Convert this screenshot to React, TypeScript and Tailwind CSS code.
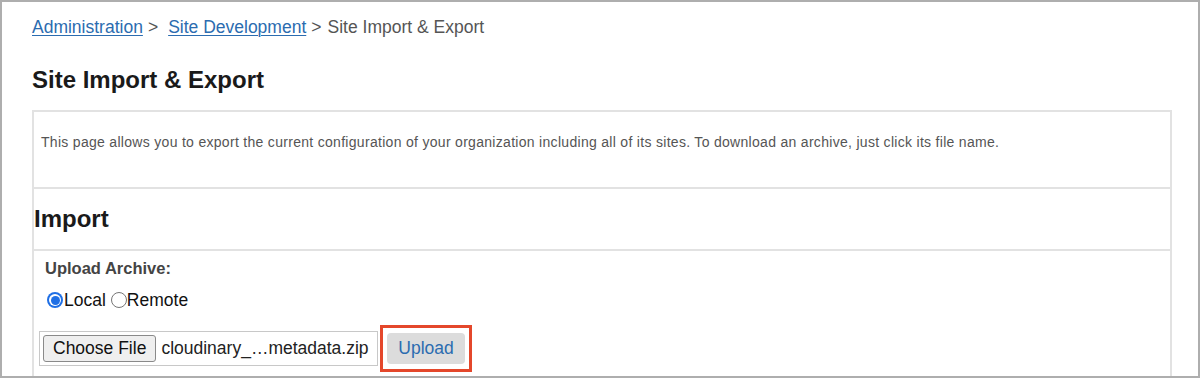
import React from "react";

function Radio({ checked }: { checked?: boolean }) {
  if (checked) {
    return (
      <span className="flex h-[16px] w-[16px] shrink-0 items-center justify-center rounded-full bg-[#1f6fe5]">
        <span className="flex h-[12px] w-[12px] items-center justify-center rounded-full bg-white">
          <span className="h-[9px] w-[9px] rounded-full bg-[#1f6fe5]" />
        </span>
      </span>
    );
  }
  return <span className="box-border block h-[16px] w-[16px] shrink-0 rounded-full border border-[#767676] bg-white" />;
}

export default function App() {
  return (
    <div className="box-border h-[378px] w-[1200px] overflow-hidden border-2 border-[#aeaeae] bg-white pl-[30px] pr-[26px] font-['Liberation_Sans',Arial,sans-serif]">
      {/* Breadcrumb */}
      <div className="mt-[15px] flex items-center text-[17.5px] leading-[20px] text-[#555]">
        <a href="#" className="text-[#2b6cb0] underline decoration-1 underline-offset-2">
          Administration
        </a>
        <span className="ml-[5px] mr-[10px]">&gt;</span>
        <a href="#" className="text-[#2b6cb0] underline decoration-1 underline-offset-2">
          Site Development
        </a>
        <span className="ml-[5px] mr-[6px]">&gt;</span>
        <span>Site Import &amp; Export</span>
      </div>

      <h1 className="mt-[29px] text-[24px] font-bold leading-[28px] text-[#1a1a1a]">
        Site Import &amp; Export
      </h1>

      {/* Content table */}
      <div className="mt-[16px] border-2 border-[#e2e2e2]">
        <div className="box-border h-[75px] px-[7px] pt-[22px] text-[14px] leading-[17px] tracking-[0.3px] text-[#555]">
          This page allows you to export the current configuration of your organization including all of its sites. To download an archive, just click its file name.
        </div>
        <div className="box-border flex h-[62px] items-center border-t-2 border-[#e2e2e2]">
          <h2 className="text-[24px] font-bold leading-[28px] text-[#1a1a1a]">Import</h2>
        </div>
        <div className="box-border h-[160px] border-t-2 border-[#e2e2e2] pt-[7px]">
          <div className="pl-[11px] text-[16.5px] font-bold leading-[20px] text-[#444]">Upload Archive:</div>
          <div className="mt-[12px] flex items-center pl-[13px] text-[17.5px] leading-[20px] text-[#111]">
            <Radio checked />
            <span className="ml-[1px]">Local</span>
            <span className="ml-[5px]">
              <Radio />
            </span>
            <span>Remote</span>
          </div>
          <div className="mt-[15px] flex items-center pl-[5px]">
            <div className="box-border flex h-[35px] w-[339px] items-center border border-[#c8c8c8] px-[3px]">
              <span className="box-border flex h-[27px] items-center rounded-[3px] border border-[#8a8a8a] bg-[#efefef] px-[9px] text-[17.5px] text-[#111]">
                Choose File
              </span>
              <span className="ml-[5px] text-[17.5px] text-[#222]">cloudinary_…metadata.zip</span>
            </div>
            <div className="ml-[2px] box-border flex h-[47px] w-[92px] items-center justify-center border-[3px] border-[#e4472b]">
              <span className="flex h-[31px] w-[78px] items-center justify-center rounded-[4px] bg-[#dcdcdc] text-[17.5px] text-[#2b6cb0]">
                Upload
              </span>
            </div>
          </div>
        </div>
      </div>
    </div>
  );
}
